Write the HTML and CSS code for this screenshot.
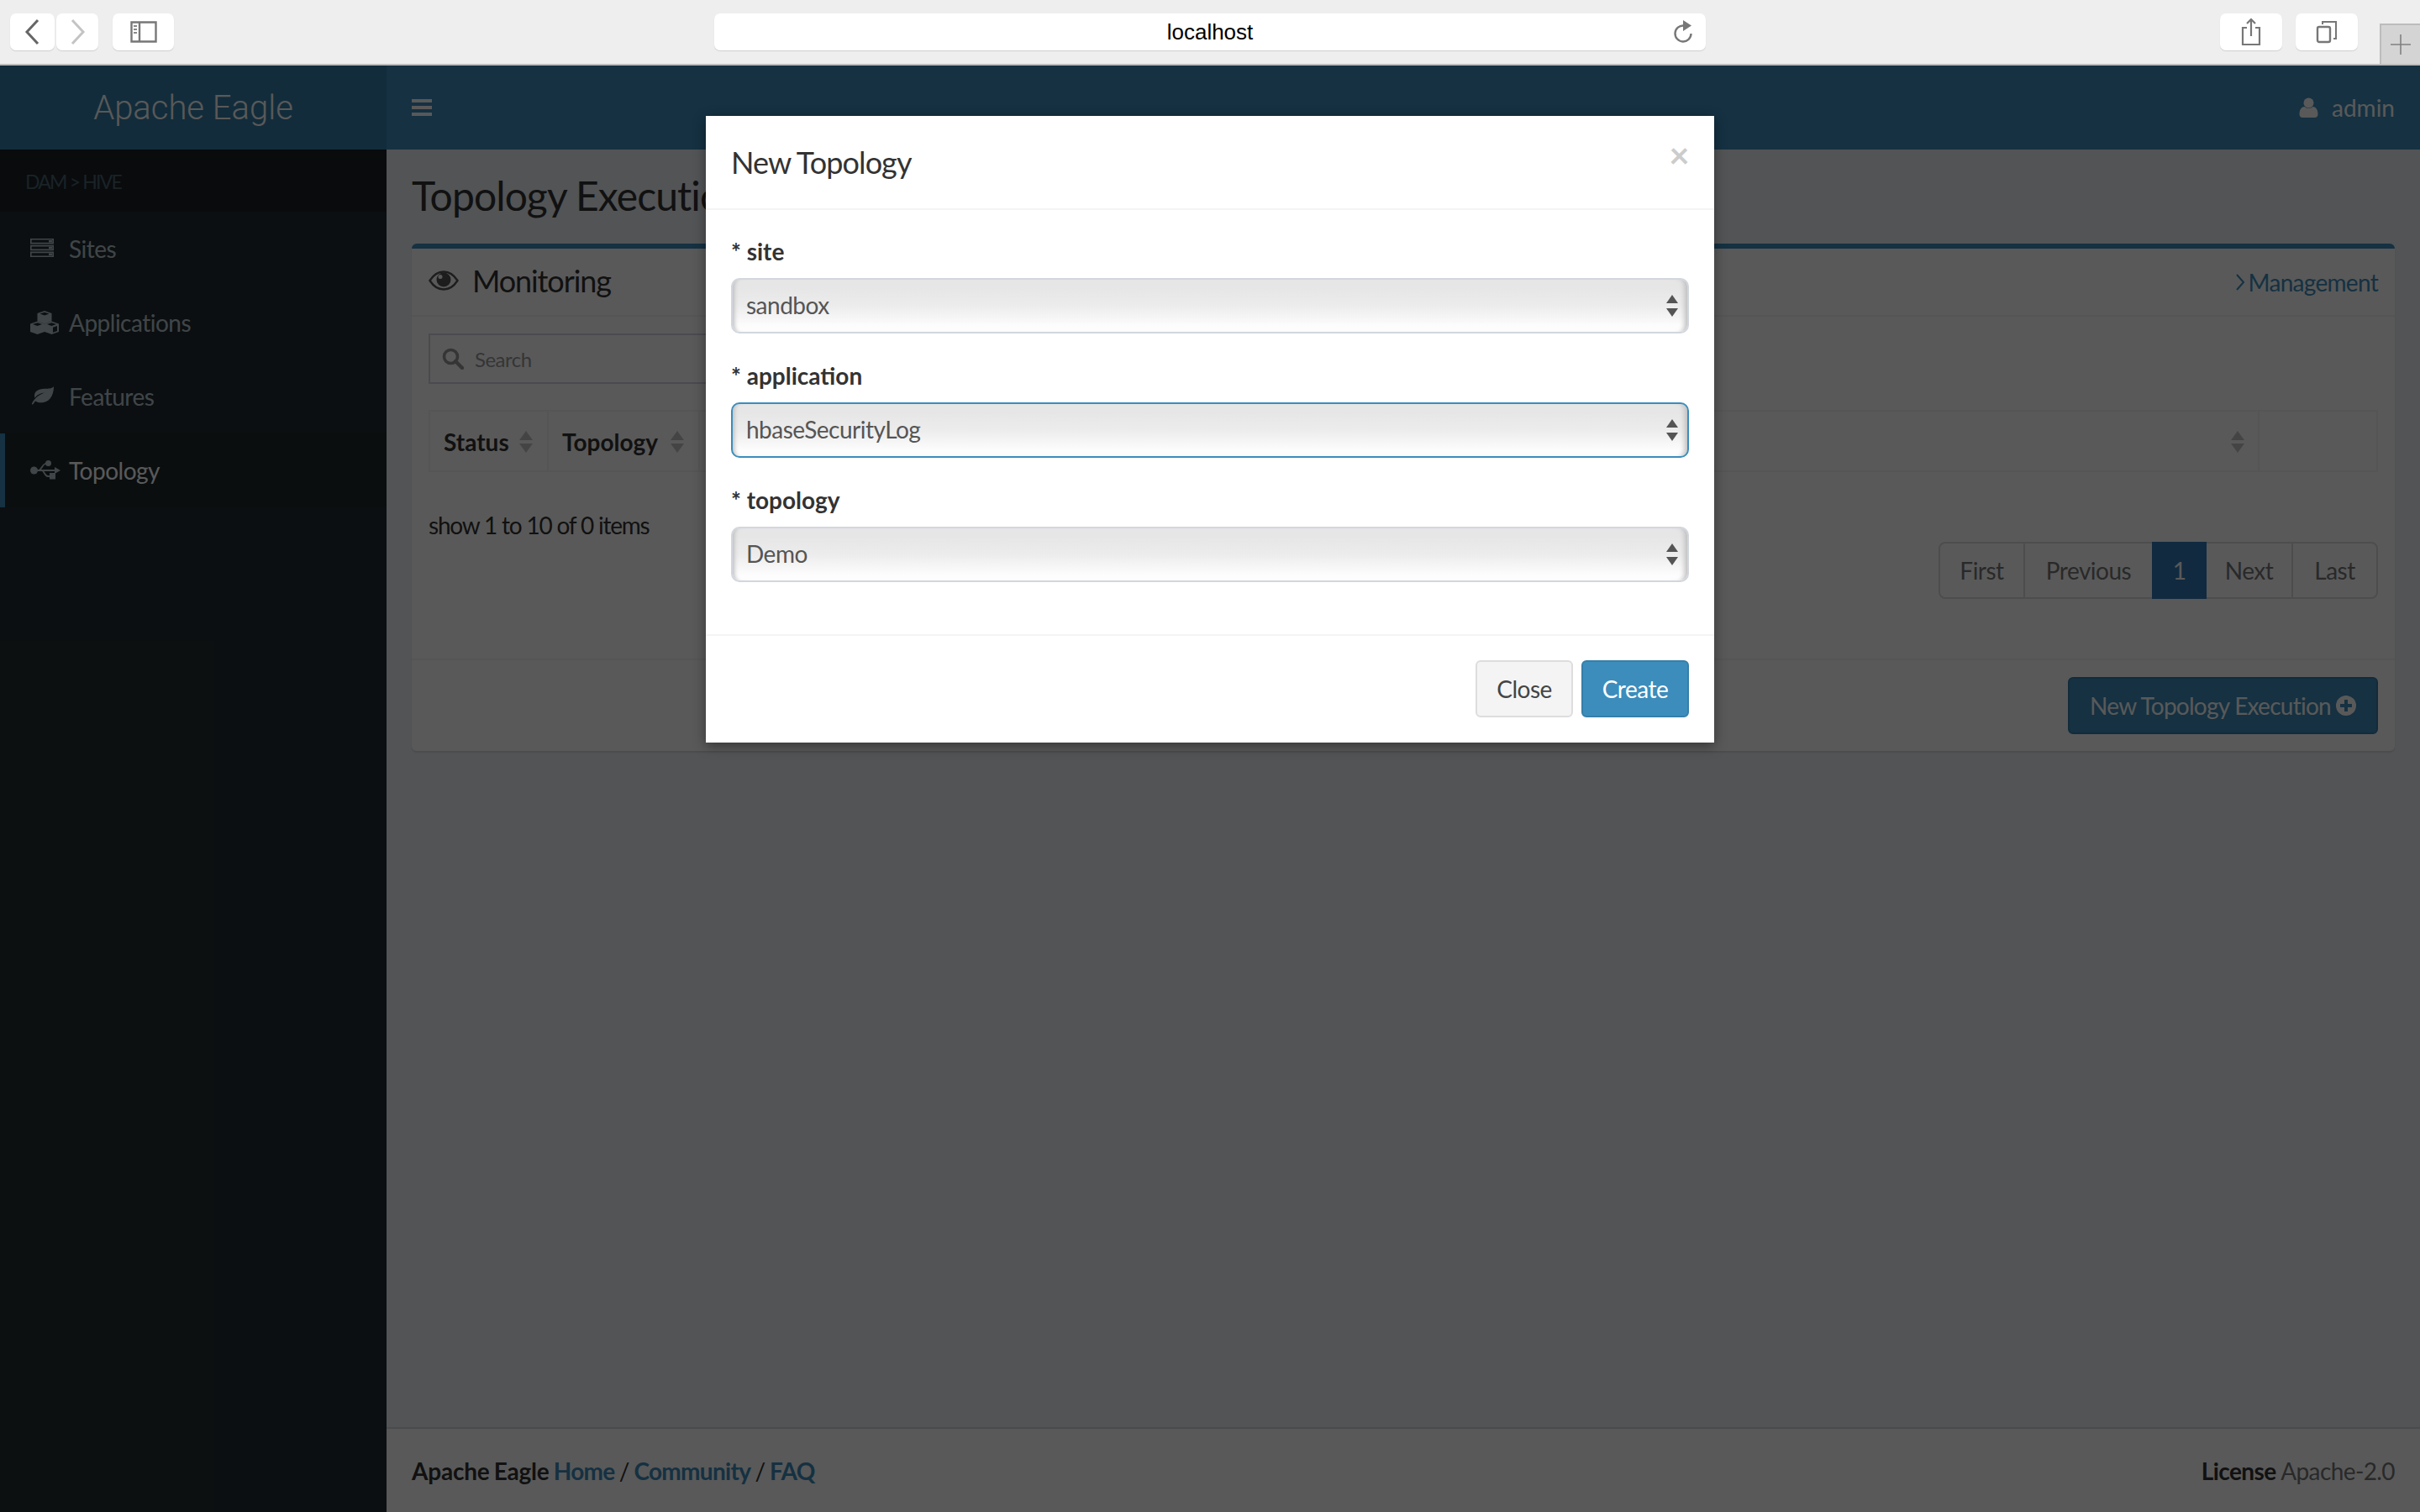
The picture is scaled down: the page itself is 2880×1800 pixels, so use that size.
FILE: index.html
```html
<!DOCTYPE html>
<html lang="en">
<head>
  <meta charset="UTF-8" />
  <title>Apache Eagle</title>
  <link rel="stylesheet" href="styles.css">
</head>
<body>
  <!-- Browser toolbar -->
  <div class="toolbar">
    <div class="tool-group">
      <button class="tool-btn back">
        <svg width="24" height="34" viewBox="0 0 24 34"><path d="M18 3 5 17l13 14" fill="none" stroke="#666" stroke-width="3"/></svg>
      </button>
      <button class="tool-btn forward">
        <svg width="24" height="34" viewBox="0 0 24 34"><path d="M6 3l13 14L6 31" fill="none" stroke="#c4c4c4" stroke-width="3"/></svg>
      </button>
      <button class="tool-btn sidebar-btn">
        <svg width="32" height="26" viewBox="0 0 32 26"><path d="M1.500 1.500h29v23h-29zM11 1.500v23" fill="none" stroke="#777" stroke-width="2.400"/><path d="M4 6h4M4 10h4M4 14h4" stroke="#888" stroke-width="2"/></svg>
      </button>
    </div>
    <div class="url-bar">
      <span>localhost</span>
      <svg class="reload" width="24" height="28" viewBox="0 0 24 28"><path d="M13 7.500A9.500 9.500 0 1 0 21.500 17" fill="none" stroke="#777" stroke-width="2.400"/><path d="M12 1l10 6.500L12 14z" fill="#777"/></svg>
    </div>
    <div class="tool-group right">
      <button class="tool-btn wide">
        <svg width="24" height="34" viewBox="0 0 24 34"><path d="M7 12H2v20h20V12h-5M12 22V2M7 7l5-5 5 5" fill="none" stroke="#777" stroke-width="2.200"/></svg>
      </button>
      <button class="tool-btn wide">
        <svg width="26" height="28" viewBox="0 0 26 28"><path d="M8 5V2h16v20h-3" fill="none" stroke="#777" stroke-width="2"/><rect x="2" y="8" width="15" height="18" rx="2" fill="none" stroke="#777" stroke-width="2.400"/></svg>
      </button>
    </div>
    <div class="new-tab">
      <svg width="24" height="24" viewBox="0 0 24 24"><path d="M12 0v24M0 12h24" stroke="#808080" stroke-width="1.600"/></svg>
    </div>
  </div>

  <div class="app">
    <header class="main-header">
      <div class="logo">Apache Eagle</div>
      <nav class="navbar">
        <svg class="bars" width="24" height="20" viewBox="0 0 24 20"><path d="M0 0h24v4H0zM0 8h24v4H0zM0 16h24v4H0z" fill="#fff"/></svg>
        <div class="user">
          <svg width="23" height="24" viewBox="0 0 22 24"><circle cx="11" cy="6.500" r="6" fill="#fff"/><path d="M0 20c0-6 3-9 6-9 3 2.500 7 2.500 10 0 3 0 6 3 6 9 0 2.500-1.500 4-4 4H4c-2.500 0-4-1.500-4-4z" fill="#fff"/></svg>
          <span>admin</span>
        </div>
      </nav>
    </header>

    <div class="layout">
      <aside class="sidebar">
        <div class="crumb">DAM &gt; HIVE</div>
        <a class="side-item">
          <svg class="side-icon icon-sites" width="28" height="22" viewBox="0 0 28 22"><path d="M.8.800h26.400v4.800H.8zM.8 8.600h26.400v4.800H.8zM.8 16.400h26.400v4.800H.8z" fill="none" stroke="#b8c7ce" stroke-width="1.600"/><path d="M22 2h4v2.500h-4zM22 9.800h4v2.500h-4zM22 17.600h4v2.500h-4z" fill="#b8c7ce"/></svg>
          <span>Sites</span>
        </a>
        <a class="side-item">
          <svg class="side-icon icon-apps" width="34" height="28" viewBox="0 0 34 28"><path d="M17 0l8.500 3v9.500L17 15.500l-8.500-3V3z" fill="#b8c7ce"/><path d="M8.500 12.500l8.500 3v9.500L8.500 28 0 25v-9.500z" fill="#b8c7ce"/><path d="M25.500 12.500l8.500 3V25l-8.500 3-8.500-3v-9.500z" fill="#b8c7ce"/><path d="M11.500 3.500L17 1.800l5.500 1.700L17 5.500zM3 16L8.500 14.300 14 16 8.500 18zM20 16l5.500-1.700L31 16l-5.500 2zM27 19.800l5-1.800v6l-5 1.800z" fill="#222d32"/></svg>
          <span>Applications</span>
        </a>
        <a class="side-item">
          <svg class="side-icon icon-leaf" width="28" height="22" viewBox="0 0 28 24" preserveAspectRatio="none"><path d="M28 0c-2 3-6 3-11 3C9 3 5 7 5 12c0 1 .2 2 .5 3C8 11 12 9 18 8c-6 2-12 6-16 14-.5 1 1 2 1.500 1 .8-1.500 1.700-3 2.500-4 2 1.500 4.500 2 7 2C24 21 28 10 28 0z" fill="#b8c7ce"/></svg>
          <span>Features</span>
        </a>
        <a class="side-item active">
          <svg class="side-icon icon-usb" width="36" height="24" viewBox="0 0 36 24"><circle cx="4.500" cy="12" r="4.500" fill="#b8c7ce"/><path d="M4 12h26M10 12c4-1 4-7 8-8h3M14 12c3 1 3 7 7 7h3" fill="none" stroke="#b8c7ce" stroke-width="1.800"/><circle cx="21.500" cy="3.500" r="3.500" fill="#b8c7ce"/><rect x="23" y="15" width="7" height="7.500" fill="#b8c7ce"/><path d="M29 8l7 4-7 4z" fill="#b8c7ce"/></svg>
          <span>Topology</span>
        </a>
      </aside>

      <main class="main">
        <section class="content">
          <h1 class="page-title">Topology Execution</h1>
          <div class="box">
            <div class="box-header">
              <div class="box-title">
                <svg width="36" height="24" viewBox="0 0 36 24"><path d="M1.500 12C6 5 11.500 1.500 18 1.500S30 5 34.500 12C30 19 24.500 22.500 18 22.500S6 19 1.500 12z" fill="none" stroke="#555" stroke-width="2.400"/><circle cx="18" cy="11" r="8.500" fill="#555"/><circle cx="14" cy="7.500" r="2.500" fill="#fff"/></svg>
                <span>Monitoring</span>
              </div>
              <a class="manage-link">
                <svg width="12" height="22" viewBox="0 0 12 22"><path d="M2 2l8 9-8 9" fill="none" stroke="#3c8dbc" stroke-width="2"/></svg>
                <span>Management</span>
              </a>
            </div>
            <div class="box-body">
              <div class="search">
                <svg width="26" height="26" viewBox="0 0 26 26"><circle cx="10.500" cy="10.500" r="8" fill="none" stroke="#999" stroke-width="3.600"/><path d="M16 16l8 8" stroke="#999" stroke-width="4.400" stroke-linecap="round"/></svg>
                <span>Search</span>
              </div>
              <div class="thead">
                <div class="th th-status">Status <span class="sort"></span></div>
                <div class="th th-topology">Topology <span class="sort"></span></div>
                <div class="th th-rest"><span class="sort"></span></div>
                <div class="th th-last"></div>
              </div>
              <div class="table-foot">
                <div class="count">show 1 to 10 of 0 items</div>
                <ul class="pagination">
                  <li class="page-first">First</li>
                  <li class="page-prev">Previous</li>
                  <li class="page-cur">1</li>
                  <li class="page-next">Next</li>
                  <li class="page-last">Last</li>
                </ul>
              </div>
            </div>
            <div class="box-footer">
              <button class="btn-new">
                <span>New Topology Execution</span>
                <svg width="24" height="24" viewBox="0 0 24 24"><circle cx="12" cy="12" r="12" fill="#fff"/><path d="M10 5h4v5h5v4h-5v5h-4v-5H5v-4h5z" fill="#3c8dbc"/></svg>
              </button>
            </div>
          </div>
        </section>
        <footer class="page-footer">
          <div class="foot-left"><b>Apache Eagle</b> <a>Home</a> <b class="slash">/</b> <a>Community</a> <b class="slash">/</b> <a>FAQ</a></div>
          <div class="foot-right"><b>License</b> Apache-2.0</div>
        </footer>
      </main>
    </div>

    <div class="backdrop"></div>

    <div class="modal-wrap">
      <div class="modal">
        <div class="modal-header">
          <h4>New Topology</h4>
          <span class="close">×</span>
        </div>
        <div class="modal-body">
          <div class="field">
            <label>* site</label>
            <div class="select-box">
              <select class="fake-select"><option>sandbox</option></select>
              <span class="arrows"></span>
            </div>
          </div>
          <div class="field">
            <label>* application</label>
            <div class="select-box">
              <select class="fake-select focused"><option>hbaseSecurityLog</option></select>
              <span class="arrows"></span>
            </div>
          </div>
          <div class="field">
            <label>* topology</label>
            <div class="select-box">
              <select class="fake-select"><option>Demo</option></select>
              <span class="arrows"></span>
            </div>
          </div>
        </div>
        <div class="modal-footer">
          <button class="btn btn-close">Close</button>
          <button class="btn btn-create">Create</button>
        </div>
      </div>
    </div>
  </div>
</body>
</html>
```

FILE: styles.css
```css
* {
  margin: 0; padding: 0; box-sizing: border-box;
}

html, body {
  width: 2880px;
  height: 1800px;
  overflow: hidden;
}

body {
  font-family: "Lato", "Noto Sans", sans-serif;
  font-size: 28px;
  letter-spacing: -0.5px;
  color: #333;
  background: #ecf0f5;
}

button {
  font-family: inherit;
  letter-spacing: inherit;
}

/* Browser toolbar */
.toolbar {
  height: 78px;
  background: #eeeeee;
  border-bottom: 2px solid #bcbcbc;
  display: flex;
  align-items: flex-start;
  padding: 16px 0 0 12px;
  position: relative;
}

.tool-group {
  display: flex;
}

.tool-btn {
  height: 44px;
  background: #fff;
  border: none;
  border-radius: 7px;
  box-shadow: 0 1px 1px #cfcfcf;
  display: flex;
  align-items: center;
  justify-content: center;
}

.back { width: 53px; margin-right: 2px; }
.forward { width: 50px; margin-right: 17px; }
.sidebar-btn { width: 73px; }

.url-bar {
  width: 1180px;
  height: 44px;
  margin-left: 643px;
  background: #fff;
  border-radius: 7px;
  box-shadow: 0 1px 1px #cfcfcf;
  display: flex;
  align-items: center;
  justify-content: center;
  font-family: "Liberation Sans", sans-serif;
  font-size: 26px;
  letter-spacing: 0;
  color: #000;
  position: relative;
}

.reload {
  position: absolute;
  right: 15px;
  top: 7px;
}

.tool-group.right {
  gap: 16px;
  margin-left: 612px;
}

.wide { width: 74px; }

.new-tab {
  width: 48px;
  height: 48px;
  margin: 12px 0 0 26px;
  background: #d4d4d4;
  border: 2px solid #bcbcbc;
  border-width: 2px 0 0 2px;
  display: flex;
  align-items: center;
  justify-content: center;
}

/* App frame */
.app {
  height: 1722px;
  position: relative;
  display: flex;
  flex-direction: column;
}

.main-header {
  height: 100px;
  display: flex;
  color: #fff;
}

.logo {
  width: 460px;
  background: #367fa9;
  display: flex;
  align-items: center;
  justify-content: center;
  font-family: "Roboto", sans-serif;
  font-weight: 300;
  font-size: 40px;
  letter-spacing: 0;
}

.navbar {
  flex: 1;
  background: #3c8dbc;
  display: flex;
  align-items: center;
  justify-content: space-between;
  padding: 0 30px;
}

.user {
  display: flex;
  align-items: center;
  gap: 16px;
  font-size: 28px;
  letter-spacing: 0;
}

.layout {
  flex: 1;
  display: flex;
  min-height: 0;
}

/* Sidebar */
.sidebar {
  width: 460px;
  background: #222d32;
  color: #b8c7ce;
}

.crumb {
  height: 74px;
  background: #1a2226;
  color: #4b646f;
  font-size: 23px;
  letter-spacing: -1.800px;
  padding: 24px 0 0 30px;
}

.side-item {
  height: 88px;
  display: flex;
  align-items: center;
  padding-left: 36px;
  position: relative;
}

.side-icon {
  position: absolute;
  left: 36px;
  top: 32px;
}

.icon-apps { top: 30px; }

.side-item span {
  margin-left: 46px;
}

.side-item.active {
  background: #1e282c;
  color: #fff;
  box-shadow: inset 6px 0 0 #3c8dbc;
}

/* Content */
.main {
  flex: 1;
  display: flex;
  flex-direction: column;
  min-width: 0;
}

.content {
  flex: 1;
  padding: 0 30px;
}

.page-title {
  font-size: 48px;
  font-weight: 400;
  letter-spacing: -0.9px;
  height: 112px;
  line-height: 110px;
  color: #333;
  white-space: nowrap;
}

.box {
  height: 604px;
  background: #fff;
  border-top: 6px solid #3c8dbc;
  border-radius: 6px;
  box-shadow: 0 2px 2px rgba(0, 0, 0, 0.1);
  display: flex;
  flex-direction: column;
}

.box-header {
  height: 81px;
  border-bottom: 2px solid #f4f4f4;
  display: flex;
  align-items: center;
  justify-content: space-between;
  padding: 0 20px;
}

.box-title {
  display: flex;
  align-items: center;
  gap: 16px;
  font-size: 36px;
  letter-spacing: -1.100px;
  margin-top: -3px;
}

.manage-link {
  color: #3c8dbc;
  display: flex;
  align-items: center;
  gap: 4px;
  letter-spacing: -0.7px;
}

.box-body {
  flex: 1;
  padding: 20px 20px 0;
}

.search {
  width: 1000px;
  height: 60px;
  border: 2px solid #d2d6de;
  display: flex;
  align-items: center;
  gap: 13px;
  padding-left: 14px;
  font-size: 24px;
  color: #999;
}

.thead {
  height: 74px;
  margin-top: 31px;
  display: flex;
  border: 2px solid #f4f4f4;
  font-weight: 700;
  letter-spacing: 0;
}

.th {
  display: flex;
  align-items: center;
  border-right: 2px solid #f4f4f4;
  padding-top: 2px;
}

.th-status { width: 141px; padding-left: 16px; gap: 12px; }
.th-topology { width: 180px; padding-left: 16px; gap: 15px; }
.th-rest { flex: 1; justify-content: flex-end; padding-right: 16px; }
.th-last { width: 139px; border-right: none; }

.sort {
  width: 16px;
  height: 26px;
  flex: none;
  position: relative;
  display: block;
}

.sort::before, .sort::after {
  content: "";
  position: absolute;
  left: 0;
  border-left: 8px solid transparent;
  border-right: 8px solid transparent;
}

.sort::before { top: 0; border-bottom: 11px solid #c4c4c4; }
.sort::after { bottom: 0; border-top: 11px solid #c4c4c4; }

.table-foot {
  display: flex;
  justify-content: space-between;
  align-items: flex-start;
}

.count {
  margin-top: 46px;
  letter-spacing: -1.2px;
}

.pagination {
  list-style: none;
  display: flex;
  height: 68px;
  margin-top: 83px;
  color: #777;
  border: 2px solid #ddd;
  border-radius: 8px;
}

.pagination li {
  display: flex;
  align-items: center;
  justify-content: center;
  border-right: 2px solid #ddd;
}

.pagination .page-first { width: 101px; }
.pagination .page-prev { width: 151px; border-right: none; }
.pagination .page-cur { width: 65px; margin: -2px 0; background: #337ab7; color: #fff; border-right: none; }
.pagination .page-next { width: 103px; }
.pagination .page-last { width: 99px; border-right: none; }

.box-footer {
  height: 110px;
  border-top: 2px solid #f4f4f4;
  display: flex;
  justify-content: flex-end;
  padding: 20px 20px 0;
}

.btn-new {
  width: 369px;
  height: 68px;
  background: #3c8dbc;
  border: 2px solid #367fa9;
  border-radius: 6px;
  color: #fff;
  font-size: 28px;
  letter-spacing: -0.75px;
  display: flex;
  align-items: center;
  justify-content: center;
  gap: 6px;
  white-space: nowrap;
}

.page-footer {
  height: 101px;
  background: #fff;
  border-top: 2px solid #d2d6de;
  display: flex;
  justify-content: space-between;
  align-items: center;
  padding: 0 30px;
}

.foot-left {
  word-spacing: -1.500px;
}

.foot-left a {
  color: #3c8dbc;
  font-weight: 700;
  letter-spacing: -0.7px;
}

.foot-left b {
  letter-spacing: -0.2px;
}

.foot-right {
  color: #777;
  letter-spacing: -0.6px;
}

.foot-right b, .foot-left b {
  color: #333;
}

.slash {
  font-weight: 400;
}

/* Dim layer and dialog */
.backdrop {
  position: absolute;
  inset: 0;
  background: rgba(0, 0, 0, 0.65);
}

.modal-wrap {
  position: absolute;
  inset: 0;
  display: flex;
  justify-content: center;
  align-items: flex-start;
  padding-top: 60px;
}

.modal {
  width: 1200px;
  height: 746px;
  background: #fff;
  box-shadow: 0 4px 14px rgba(0, 0, 0, 0.4);
  display: flex;
  flex-direction: column;
}

.modal-header {
  height: 112px;
  border-bottom: 2px solid #f4f4f4;
  display: flex;
  justify-content: space-between;
  padding: 0 30px;
}

.modal-header h4 {
  font-size: 36px;
  font-weight: 400;
  letter-spacing: -0.9px;
  line-height: 110px;
}

.close {
  font-size: 42px;
  font-weight: 700;
  color: #ccc;
  line-height: 92px;
}

.modal-body {
  height: 505px;
  padding: 29px 30px 0;
  display: flex;
  flex-direction: column;
  gap: 30px;
}

.field label {
  display: block;
  height: 40px;
  line-height: 40px;
  font-weight: 700;
  letter-spacing: 0;
  margin-bottom: 12px;
}

.select-box {
  position: relative;
  height: 66px;
}

.fake-select {
  appearance: none;
  -webkit-appearance: none;
  display: block;
  width: 100%;
  height: 66px;
  padding-left: 16px;
  padding-bottom: 2px;
  border: 2px solid #d2d6de;
  border-radius: 10px;
  outline: none;
  background: linear-gradient(#e6e6e6 15%, #ececec 50%, #fdfdfd 90%);
  box-shadow: inset 7px 0 5px -5px #bdbdbd, inset -8px 0 6px -5px #bdbdbd;
  font-family: inherit;
  font-size: 28px;
  letter-spacing: -0.5px;
  color: #555;
}

.fake-select.focused {
  border-color: #3c8dbc;
}

.arrows {
  position: absolute;
  right: 13px;
  top: 20px;
  width: 14px;
  height: 26px;
}

.arrows::before, .arrows::after {
  content: "";
  position: absolute;
  left: 0;
  border-left: 7px solid transparent;
  border-right: 7px solid transparent;
}

.arrows::before { top: 0; border-bottom: 10px solid #555; }
.arrows::after { bottom: 0; border-top: 10px solid #555; }

.modal-footer {
  flex: 1;
  border-top: 2px solid #f4f4f4;
  display: flex;
  justify-content: flex-end;
  gap: 10px;
  padding: 29px 30px 0;
}

.btn {
  height: 68px;
  border-radius: 6px;
  font-size: 28px;
}

.btn-close {
  width: 116px;
  background: #f4f4f4;
  border: 2px solid #ddd;
  color: #444;
}

.btn-create {
  width: 128px;
  background: #3c8dbc;
  border: 2px solid #367fa9;
  color: #fff;
}
```
